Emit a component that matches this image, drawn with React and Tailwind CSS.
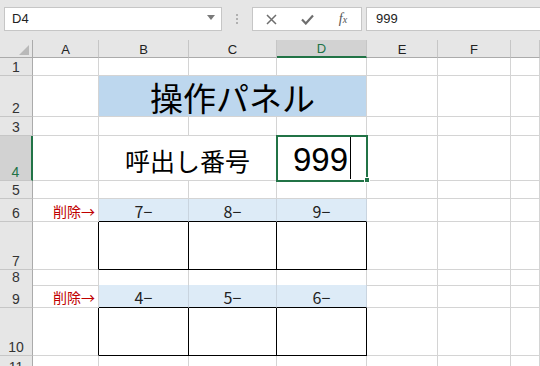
import React from "react";

const COLS = "grid shrink-0 grid-cols-[33px_66px_90px_88px_90px_71px_73px_1fr]";
const GRID = "border-r border-b border-r-[#d4d4d4] border-b-[#d4d4d4]";
const JP = "font-['Noto_Sans_CJK_JP',sans-serif]";

function RowHead({ n, sel }) {
  return (
    <div
      className={
        sel
          ? "flex items-end justify-center pb-[1px] bg-[#d2d2d2] border-b border-b-[#c6c6c6] border-r-2 border-r-[#217346] text-[14px] leading-none text-[#217346]"
          : "flex items-end justify-center pb-[1px] bg-[#e6e6e6] border-b border-b-[#c6c6c6] border-r border-r-[#ababab] text-[14px] leading-none text-[#333]"
      }
    >
      {n}
    </div>
  );
}

function Empty() {
  return <div className={GRID} />;
}

function Toolbar() {
  return (
    <div className="flex h-[40px] shrink-0 items-start bg-[#e6e6e6] pt-[7px]">
      {/* Name box */}
      <div className="ml-[4px] flex h-[24px] w-[218px] items-center justify-between border border-[#c6c6c6] bg-white pl-[7px] pr-[6px]">
        <span className="text-[13px] text-[#222]">D4</span>
        <svg width="8" height="5" viewBox="0 0 8 5" className="mb-[4px]">
          <path d="M0 0 L8 0 L4 5 Z" fill="#7a7a7a" />
        </svg>
      </div>
      {/* grip */}
      <div className="ml-[14px] mt-[7px] flex flex-col gap-[2px]">
        <div className="h-[2px] w-[2px] bg-[#b0b0b0]" />
        <div className="h-[2px] w-[2px] bg-[#b0b0b0]" />
        <div className="h-[2px] w-[2px] bg-[#b0b0b0]" />
      </div>
      {/* cancel / enter / fx */}
      <div className="ml-[14px] flex h-[24px] w-[110px] items-center border border-[#c6c6c6] bg-white">
        <div className="flex w-[36px] justify-center">
          <svg width="11" height="11" viewBox="0 0 11 11">
            <path d="M1 1 L10 10 M10 1 L1 10" stroke="#6e6e6e" strokeWidth="1.5" fill="none" />
          </svg>
        </div>
        <div className="flex w-[36px] justify-center">
          <svg width="13" height="11" viewBox="0 0 13 11">
            <path d="M1 5.5 L4.8 9.5 L12 1.5" stroke="#6e6e6e" strokeWidth="2.2" fill="none" />
          </svg>
        </div>
        <div className="flex w-[36px] justify-center font-['Liberation_Serif',serif] italic text-[#555]">
          <span className="text-[14px] leading-none">f</span>
          <span className="mt-[3px] text-[10px] leading-none">x</span>
        </div>
      </div>
      {/* formula */}
      <div className="ml-[4px] flex h-[24px] flex-1 items-center border border-r-0 border-[#c6c6c6] bg-white pl-[9px]">
        <span className="text-[13px] text-[#222]">999</span>
      </div>
    </div>
  );
}

function ColHeads() {
  const base = "flex items-end justify-center pb-[1px] text-[13px] leading-none border-b border-r border-r-[#c6c6c6]";
  return (
    <div className={`${COLS} h-[18px] bg-[#e6e6e6]`}>
      <div className="relative border-b border-r border-b-[#ababab] border-r-[#ababab]">
        <svg width="10" height="10" viewBox="0 0 10 10" className="absolute bottom-[2px] right-[3px]">
          <path d="M10 0 L10 10 L0 10 Z" fill="#b9b9b9" />
        </svg>
      </div>
      <div className={`${base} border-b-[#ababab] text-[#222]`}>A</div>
      <div className={`${base} border-b-[#ababab] text-[#222]`}>B</div>
      <div className={`${base} border-b-[#ababab] text-[#222]`}>C</div>
      <div className="flex items-end justify-center pb-[1px] text-[13px] leading-none border-b-2 border-r border-b-[#217346] border-r-[#c6c6c6] bg-[#d2d2d2] text-[#217346]">
        D
      </div>
      <div className={`${base} border-b-[#ababab] text-[#222]`}>E</div>
      <div className={`${base} border-b-[#ababab] text-[#222]`}>F</div>
      <div className={`${base} border-b-[#ababab] text-[#222]`} />
    </div>
  );
}

function Labels({ n, labels }) {
  return (
    <div className={`${COLS} h-[23px]`}>
      <RowHead n={n} />
      <div className={`${GRID} flex items-end justify-end pb-[3px] pr-[3px] ${JP} text-[14px] leading-none text-[#c00000]`}>
        削除→
      </div>
      {labels.map((t) => (
        <div
          key={t}
          className={`flex items-end justify-center pb-[2px] border-r border-b border-r-[#c9d4df] border-b-black bg-[#ddebf7] ${JP} text-[16px] leading-none text-[#222]`}
        >
          {t}
        </div>
      ))}
      <Empty />
      <Empty />
      <Empty />
    </div>
  );
}

function Boxes({ n }) {
  return (
    <div className={`${COLS} h-[48px]`}>
      <RowHead n={n} />
      <div className="border-r border-b border-r-black border-b-[#d4d4d4]" />
      <div className="border-r border-b border-black" />
      <div className="border-r border-b border-black" />
      <div className="border-r border-b border-black" />
      <Empty />
      <Empty />
      <Empty />
    </div>
  );
}

export default function App() {
  return (
    <div className="flex h-[366px] w-[540px] flex-col overflow-hidden bg-white font-['Liberation_Sans',Arial,sans-serif]">
      <Toolbar />
      <ColHeads />

      {/* 1 */}
      <div className={`${COLS} h-[18px]`}>
        <RowHead n={1} />
        <Empty /><Empty /><Empty /><Empty /><Empty /><Empty /><Empty />
      </div>

      {/* 2 title */}
      <div className={`${COLS} h-[41px]`}>
        <RowHead n={2} />
        <Empty />
        <div className={`${GRID} col-span-3 flex items-center justify-center bg-[#bdd7ee] pt-[3px] ${JP} text-[33px] leading-none text-black`}>
          操作パネル
        </div>
        <Empty /><Empty /><Empty />
      </div>

      {/* 3 */}
      <div className={`${COLS} h-[19px]`}>
        <RowHead n={3} />
        <Empty /><Empty /><Empty /><Empty /><Empty /><Empty /><Empty />
      </div>

      {/* 4 */}
      <div className={`${COLS} h-[45px]`}>
        <RowHead n={4} sel />
        <Empty />
        <div className={`${GRID} col-span-2 flex items-center justify-center pt-[5px] ${JP} text-[25px] leading-none text-black`}>
          呼出し番号
        </div>
        <div className={`${GRID} relative flex items-center justify-end pr-[15px]`}>
          <span className="pt-[3px] text-[33px] leading-none text-black">999</span>
          <div className="ml-[2px] h-[42px] w-px bg-black" />
          <div className="absolute -left-[1px] -top-[1px] h-[47px] w-[92px] border-2 border-[#217346]" />
          <div className="absolute -bottom-[3px] -right-[4px] h-[6px] w-[6px] border border-white bg-[#217346]" />
        </div>
        <Empty /><Empty /><Empty />
      </div>

      {/* 5 */}
      <div className={`${COLS} h-[18px]`}>
        <RowHead n={5} />
        <Empty /><Empty /><Empty /><Empty /><Empty /><Empty /><Empty />
      </div>

      <Labels n={6} labels={["7−", "8−", "9−"]} />
      <Boxes n={7} />

      {/* 8 */}
      <div className={`${COLS} h-[15px]`}>
        <RowHead n={8} />
        <Empty /><Empty /><Empty /><Empty /><Empty /><Empty /><Empty />
      </div>

      <Labels n={9} labels={["4−", "5−", "6−"]} />
      <Boxes n={10} />

      {/* 11 */}
      <div className={`${COLS} h-[20px]`}>
        <RowHead n={11} />
        <Empty /><Empty /><Empty /><Empty /><Empty /><Empty /><Empty />
      </div>
    </div>
  );
}
